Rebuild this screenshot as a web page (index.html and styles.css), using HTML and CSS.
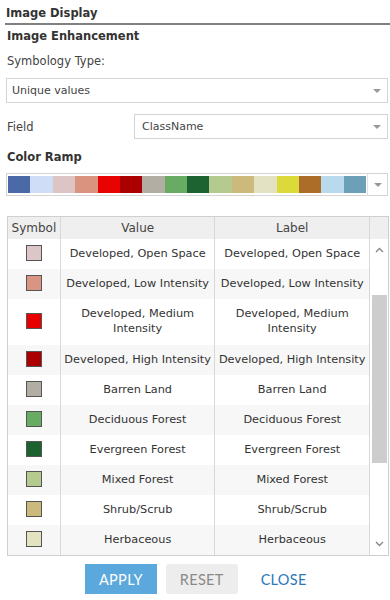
FILE: index.html
```html
<!DOCTYPE html>
<html lang="en">
<head>
  <meta charset="UTF-8">
  <meta name="viewport" content="width=device-width, initial-scale=1.0">
  <title>Image Display</title>
  <link rel="stylesheet" href="styles.css">
</head>
<body>
  <div class="panel">
    <div class="title">Image Display</div>
    <div class="subtitle">Image Enhancement</div>
    <div class="label">Symbology Type:</div>
    <div class="select">
      <span>Unique values</span>
      <span class="caret"></span>
    </div>

    <div class="field-row">
      <div class="field-label">Field</div>
      <div class="select select-field">
        <span>ClassName</span>
        <span class="caret"></span>
      </div>
    </div>

    <div class="subtitle ramp-title">Color Ramp</div>
    <div class="ramp">
      <div class="ramp-colors">
        <div style="background:#4a69a6"></div>
        <div style="background:#d0ddf6"></div>
        <div style="background:#ddc5c6"></div>
        <div style="background:#d9937f"></div>
        <div style="background:#e80202"></div>
        <div style="background:#aa0000"></div>
        <div style="background:#b3aea3"></div>
        <div style="background:#68ab62"></div>
        <div style="background:#1d6331"></div>
        <div style="background:#b5ca8e"></div>
        <div style="background:#ccb97c"></div>
        <div style="background:#e3e3c3"></div>
        <div style="background:#dcd93a"></div>
        <div style="background:#ab6d28"></div>
        <div style="background:#b9d9ec"></div>
        <div style="background:#6d9fb9"></div>
      </div>
      <div class="ramp-arrow"><span class="caret"></span></div>
    </div>

    <div class="grid">
      <div class="grid-head">
        <div class="cell sym">Symbol</div>
        <div class="cell">Value</div>
        <div class="cell">Label</div>
        <div class="cell bar"></div>
      </div>
      <div class="grid-main">
        <div class="rows" id="rows"></div>
        <div class="scroll">
          <svg class="chev" width="9" height="6" viewBox="0 0 9 6"><path d="M1 5 L4.5 1.5 L8 5" fill="none" stroke="#888" stroke-width="1.4"/></svg>
          <div class="track"><div class="thumb"></div></div>
          <svg class="chev" width="9" height="6" viewBox="0 0 9 6"><path d="M1 1 L4.5 4.5 L8 1" fill="none" stroke="#888" stroke-width="1.4"/></svg>
        </div>
      </div>
    </div>

    <div class="actions">
      <button class="btn apply">APPLY</button>
      <button class="btn reset">RESET</button>
      <button class="btn close">CLOSE</button>
    </div>
  </div>

  <script>
    const classes = [
      ['#dcc6c7', 'Developed, Open Space'],
      ['#d99583', 'Developed, Low Intensity'],
      ['#e80000', 'Developed, Medium Intensity'],
      ['#ab0000', 'Developed, High Intensity'],
      ['#b3aea3', 'Barren Land'],
      ['#68ab62', 'Deciduous Forest'],
      ['#1c6330', 'Evergreen Forest'],
      ['#b5ca8e', 'Mixed Forest'],
      ['#ccba7c', 'Shrub/Scrub'],
      ['#e3e3c2', 'Herbaceous']
    ];

    const rows = document.getElementById('rows');
    classes.forEach(([color, name]) => {
      const row = document.createElement('div');
      row.className = 'row';
      if (name.length > 25) row.classList.add('tall');
      row.innerHTML =
        `<div class="cell sym"><span class="swatch" style="background:${color}"></span></div>` +
        `<div class="cell">${name}</div>` +
        `<div class="cell">${name}</div>`;
      rows.appendChild(row);
    });
  </script>
</body>
</html>
```

FILE: styles.css
```css
body {
  margin: 0;
  background: #fff;
  font-family: "DejaVu Sans", Verdana, sans-serif;
  font-size: 11px;
  color: #333;
}

.panel {
  padding: 4px 1px 0 6px;
}

.title {
  font-weight: bold;
  font-size: 11.5px;
  height: 19px;
  line-height: 19px;
  padding-left: 1px;
  border-bottom: 2px solid #808080;
  margin: 0 -1px 0 -1px;
}

.subtitle {
  font-weight: bold;
  font-size: 11.5px;
  padding-left: 1px;
  margin-top: 3px;
  line-height: 16px;
}

.label {
  color: #444;
  font-size: 11.5px;
  margin-top: 9px;
  padding-left: 1px;
  line-height: 16px;
}

.select {
  display: flex;
  align-items: center;
  justify-content: space-between;
  height: 23px;
  border: 1px solid #d4d4d4;
  margin: 9px 1px 0 0;
  padding: 0 6px 0 5px;
  color: #444;
}

.caret {
  width: 0;
  height: 0;
  border-left: 4px solid transparent;
  border-right: 4px solid transparent;
  border-top: 4px solid #999;
}

.field-row {
  display: flex;
  align-items: center;
  margin-top: 11px;
}

.field-label {
  width: 127px;
  padding-left: 1px;
  font-size: 11.5px;
  color: #444;
}

.select-field {
  flex: 1;
  margin-top: 0;
  padding-left: 7px;
}

.ramp-title {
  margin-top: 10px;
}

.ramp {
  display: flex;
  height: 21px;
  border: 1px solid #d4d4d4;
  margin: 8px 1px 0 0;
}

.ramp-colors {
  display: flex;
  flex: 1;
  padding: 2px 1px;
}

.ramp-colors div {
  flex: 1;
}

.ramp-arrow {
  width: 19px;
  display: flex;
  align-items: center;
  justify-content: center;
  border-left: 1px solid #e2e2e2;
}

.grid {
  margin: 20px 0 0 1px;
  border: 1px solid #cfcfcf;
  text-align: center;
  font-size: 11.3px;
}

.grid-head {
  display: flex;
  height: 22px;
  background: #efefef;
  color: #444;
  font-size: 12px;
}

.cell {
  display: flex;
  align-items: center;
  justify-content: center;
  border-left: 1px solid #d8d8d8;
  width: 155px;
  line-height: 15px;
  box-sizing: border-box;
}

.cell.sym {
  border-left: none;
  width: 52px;
}

.cell.bar {
  width: 19px;
}

.grid-main {
  display: flex;
  height: 316px;
  overflow: hidden;
}

.rows {
  width: 361px;
}

.row {
  display: flex;
  height: 30px;
}

.row:nth-child(even) {
  background: #f7f7f7;
}

.row.tall {
  height: 46px;
}

.row .cell {
  padding: 0 2px 2px;
}

.swatch {
  width: 14px;
  height: 14px;
  border: 1px solid #555;
}

.scroll {
  width: 19px;
  box-sizing: border-box;
  border-left: 1px solid #d8d8d8;
  display: flex;
  flex-direction: column;
  align-items: center;
}

.chev {
  margin: 8px 0;
}

.track {
  flex: 1;
  width: 100%;
  padding: 34px 0 70px 2px;
  box-sizing: border-box;
}

.thumb {
  height: 100%;
  width: 15px;
  background: #cdcdcd;
}

.actions {
  display: flex;
  gap: 9px;
  margin-top: 8px;
  padding-left: 79px;
}

.btn {
  font-family: Lato, "Open Sans", sans-serif;
  font-size: 14.5px;
  height: 30px;
  border: none;
  padding: 0 14px;
  letter-spacing: 0.3px;
}

.apply {
  background: #5aa8dc;
  color: #fff;
}

.reset {
  background: #ededed;
  color: #8a8a8a;
  border-radius: 3px;
}

.close {
  background: none;
  color: #2a79b8;
}
```
